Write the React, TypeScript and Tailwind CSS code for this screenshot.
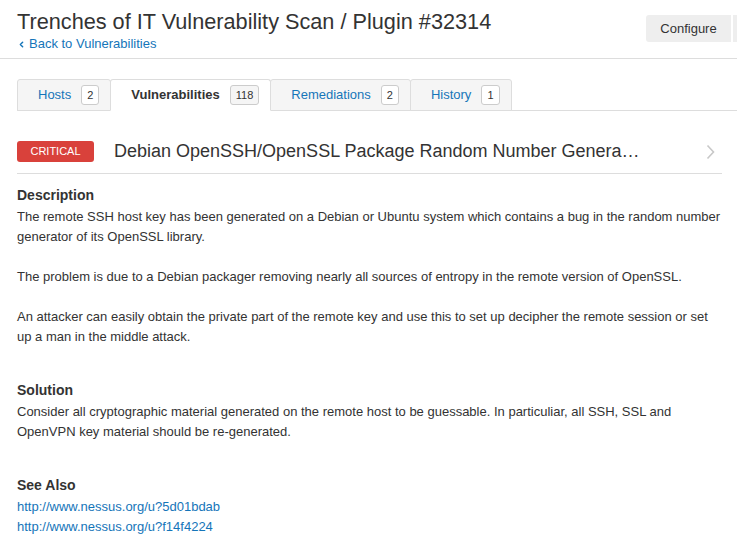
import { ChevronLeft } from "lucide-react";

const tabs = [
  { label: "Hosts", count: "2" },
  { label: "Vulnerabilities", count: "118", active: true },
  { label: "Remediations", count: "2" },
  { label: "History", count: "1" },
];

const sections = [
  {
    title: "Description",
    paras: [
      "The remote SSH host key has been generated on a Debian or Ubuntu system which contains a bug in the random number generator of its OpenSSL library.",
      "The problem is due to a Debian packager removing nearly all sources of entropy in the remote version of OpenSSL.",
      "An attacker can easily obtain the private part of the remote key and use this to set up decipher the remote session or set up a man in the middle attack.",
    ],
  },
  {
    title: "Solution",
    paras: [
      "Consider all cryptographic material generated on the remote host to be guessable. In particuliar, all SSH, SSL and OpenVPN key material should be re-generated.",
    ],
  },
];

export default function App() {
  return (
    <div className="h-[545px] w-[737px] overflow-hidden bg-white font-['Liberation_Sans',Arial,sans-serif] text-[#333]">
      <header className="flex border-b border-[#ddd] pb-[5px]">
        <div className="flex-1 pl-[17px] pt-[9px]">
          <h1 className="text-[21.7px] leading-[26px] text-[#333]">
            Trenches of IT Vulnerability Scan / Plugin #32314
          </h1>
          <a className="flex items-center gap-[3px] text-[13px] leading-[18px] text-[#1575b9]">
            <ChevronLeft className="h-[9px] w-[9px]" strokeWidth={4} />
            Back to Vulnerabilities
          </a>
        </div>
        <div className="flex w-[91px] shrink-0 gap-[2px] overflow-hidden pt-[15px]">
          <button className="h-[27px] w-[85px] shrink-0 rounded-l-[3px] bg-[#eee] text-[13px] text-[#333]">
            Configure
          </button>
          <button className="h-[27px] w-[40px] shrink-0 bg-[#eee]" />
        </div>
      </header>

      <nav className="ml-[17px] mt-[20px] flex border-b border-[#ddd]">
        {tabs.map((t, i) => (
          <div
            key={t.label}
            className={`-mb-px flex h-[32px] items-center gap-[10px] rounded-t-[3px] border pl-5 pr-[11px] text-[13px] ${
              i > 0 ? "-ml-px" : ""
            } ${
              t.active
                ? "relative border-[#ddd] border-b-white bg-white font-bold text-[#333]"
                : "border-[#ddd] bg-[#f5f5f5] text-[#1575b9]"
            }`}
          >
            {t.label}
            <span
              className={`flex h-[20px] min-w-[17px] items-center justify-center rounded-[3px] border border-[#ccc] px-[5px] text-[11px] font-normal text-[#333] ${
                t.active ? "bg-[#f5f5f5]" : "bg-white"
              }`}
            >
              {t.count}
            </span>
          </div>
        ))}
      </nav>

      <main className="mx-[17px] w-[705px]">
        <div className="mt-[30px] flex items-center border-b border-[#ddd] pb-[11px]">
          <span className="flex h-[21px] w-[77px] items-center justify-center rounded-[3px] bg-[#d9413b] text-[11px] text-white">
            CRITICAL
          </span>
          <span className="ml-[20px] flex-1 text-[18px] leading-[21px] text-[#333]">
            Debian OpenSSH/OpenSSL Package Random Number Genera…
          </span>
          <svg width="9" height="16" viewBox="0 0 9 16" className="mr-[7px]">
            <polyline points="1.5,1.5 7.5,8 1.5,14.5" fill="none" stroke="#c8c8c8" strokeWidth="1.6" />
          </svg>
        </div>

        {sections.map((s, i) => (
          <section key={s.title} className={i === 0 ? "mt-[10px]" : "mt-[32px]"}>
            <h2 className="text-[14px] font-bold leading-[23px]">{s.title}</h2>
            <div className="space-y-5 text-[13px] leading-[20px]">
              {s.paras.map((p) => (
                <p key={p}>{p}</p>
              ))}
            </div>
          </section>
        ))}

        <section className="mt-[32px]">
          <h2 className="text-[14px] font-bold leading-[23px]">See Also</h2>
          <div className="flex flex-col items-start text-[13px] leading-[20px] text-[#1575b9]">
            <a>http://www.nessus.org/u?5d01bdab</a>
            <a>http://www.nessus.org/u?f14f4224</a>
          </div>
        </section>
      </main>
    </div>
  );
}
